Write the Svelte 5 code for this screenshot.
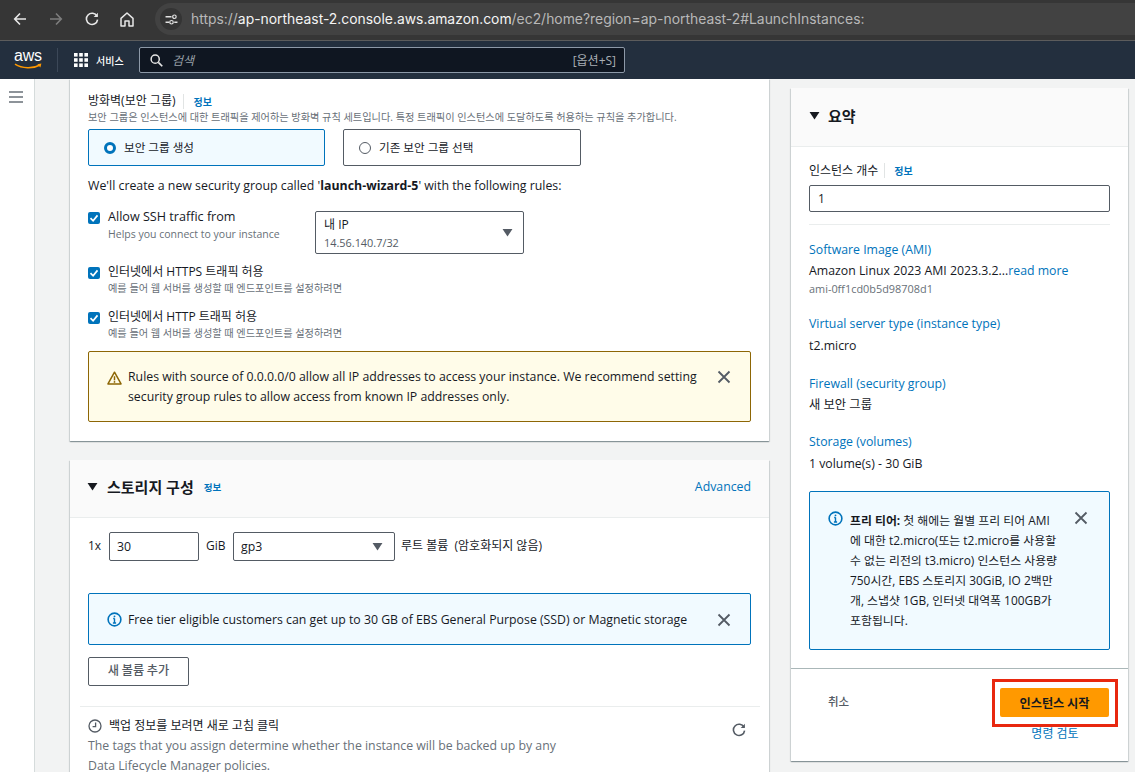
<script>
  const checks = [
    { label: '인터넷에서 HTTPS 트래픽 허용', sub: '예를 들어 웹 서버를 생성할 때 엔드포인트를 설정하려면' },
    { label: '인터넷에서 HTTP 트래픽 허용', sub: '예를 들어 웹 서버를 생성할 때 엔드포인트를 설정하려면' }
  ];
</script>

{#snippet closeIcon()}
  <svg class="close" viewBox="0 0 14 14" width="14" height="14"><path d="M1.5 1.5l11 11M12.5 1.5l-11 11" fill="none" stroke="#545b64" stroke-width="1.8"/></svg>
{/snippet}
{#snippet infoIcon()}
  <svg class="alert-icon" viewBox="0 0 16 16" width="15" height="15"><circle cx="8" cy="8" r="6.8" fill="none" stroke="#0073bb" stroke-width="1.7"/><path d="M8 7v4.6M6.3 11.7h3.4M6.6 7h1.6" fill="none" stroke="#0073bb" stroke-width="1.5"/><circle cx="8" cy="4.6" r="1" fill="#0073bb"/></svg>
{/snippet}
{#snippet checkbox()}
  <svg class="cb" viewBox="0 0 12 12" width="12" height="12"><rect width="12" height="12" rx="2" fill="#0073bb"/><path d="M2.5 6.2l2.6 2.6 4.4-5.4" fill="none" stroke="#fff" stroke-width="1.7"/></svg>
{/snippet}
{#snippet caret(cls)}
  <svg class={cls} viewBox="0 0 12 10" width="11" height="9"><path d="M0.5 1h11L6 9.5z" fill="currentColor"/></svg>
{/snippet}

<div class="page">
  <header class="chrome">
    <div class="tools">
      <svg class="t t1" viewBox="0 0 14 14" width="14" height="14"><path d="M13 7H2M7 1.5L1.7 7 7 12.5" fill="none" stroke="#e8e8e8" stroke-width="1.6"/></svg>
      <svg class="t t2" viewBox="0 0 14 14" width="14" height="14"><path d="M1 7h11M7 1.5L12.3 7 7 12.5" fill="none" stroke="#7d7d7d" stroke-width="1.6"/></svg>
      <svg class="t t3" viewBox="0 0 14 14" width="14" height="14"><path d="M12 4.2A5.6 5.6 0 1 0 12.6 7.6" fill="none" stroke="#e8e8e8" stroke-width="1.6"/><path d="M12.9 0.8v4.2H8.7z" fill="#e8e8e8"/></svg>
      <svg class="t t4" viewBox="0 0 14 15" width="14" height="15"><path d="M1 6.4L7 1l6 5.4V14H9V9H5v5H1z" fill="none" stroke="#e8e8e8" stroke-width="1.5" stroke-linejoin="round"/></svg>
    </div>
    <div class="pill">
      <span class="tune">
        <svg viewBox="0 0 14 12" width="13" height="11"><path d="M0.5 3h6.5M10 9h3.5M0.5 9h4" stroke="#e2e2e2" stroke-width="1.4" fill="none"/><circle cx="10.2" cy="3" r="1.9" fill="none" stroke="#e2e2e2" stroke-width="1.3"/><circle cx="7" cy="9" r="1.9" fill="none" stroke="#e2e2e2" stroke-width="1.3"/></svg>
      </span>
      <span class="url">https://<b>ap-northeast-2.console.aws.amazon.com</b>/ec2/home?region=ap-northeast-2#LaunchInstances:</span>
    </div>
  </header>

  <nav class="nav">
    <div class="logo">
      <span class="aws">aws</span>
      <svg viewBox="0 0 28 7" width="28" height="7"><path d="M1 1.2C8 5.6 19 6 26 2" fill="none" stroke="#f90" stroke-width="1.5"/><path d="M23.4 1.2l4-.6-1 3.8z" fill="#f90"/></svg>
    </div>
    <span class="nav-sep"></span>
    <svg class="grid" viewBox="0 0 14 14" width="14" height="14" fill="#fff"><rect width="3.6" height="3.6"/><rect x="5.2" width="3.6" height="3.6"/><rect x="10.4" width="3.6" height="3.6"/><rect y="5.2" width="3.6" height="3.6"/><rect x="5.2" y="5.2" width="3.6" height="3.6"/><rect x="10.4" y="5.2" width="3.6" height="3.6"/><rect y="10.4" width="3.6" height="3.6"/><rect x="5.2" y="10.4" width="3.6" height="3.6"/><rect x="10.4" y="10.4" width="3.6" height="3.6"/></svg>
    <span class="svc">서비스</span>
    <div class="search">
      <svg viewBox="0 0 14 14" width="13" height="13"><circle cx="5.6" cy="5.6" r="4.4" fill="none" stroke="#e6e6e6" stroke-width="1.6"/><path d="M9 9l4.2 4.2" stroke="#e6e6e6" stroke-width="1.8"/></svg>
      <span class="ph">검색</span>
      <span class="kbd">[옵션+S]</span>
    </div>
  </nav>

  <div class="body">
    <aside class="side">
      <svg viewBox="0 0 14 12" width="14" height="12"><path d="M0 1h14M0 6h14M0 11h14" stroke="#687078" stroke-width="1.7"/></svg>
    </aside>

    <main class="main">
      <section class="card c1">
        <div class="fw-head"><span class="fw-title">방화벽(보안 그룹)</span><span class="vsep"></span><span class="info-link">정보</span></div>
        <p class="fw-desc">보안 그룹은 인스턴스에 대한 트래픽을 제어하는 방화벽 규칙 세트입니다. 특정 트래픽이 인스턴스에 도달하도록 허용하는 규칙을 추가합니다.</p>
        <div class="radios">
          <div class="radio on"><span class="dot"></span>보안 그룹 생성</div>
          <div class="radio"><span class="dot"></span>기존 보안 그룹 선택</div>
        </div>
        <p class="create">We'll create a new security group called '<b>launch-wizard-5</b>' with the following rules:</p>
        <div class="ssh">
          <div class="check first">
            {@render checkbox()}
            <div class="check-text">
              <div class="check-label">Allow SSH traffic from</div>
              <div class="check-sub s1">Helps you connect to your instance</div>
            </div>
          </div>
          <div class="ip">
            <div><div class="ip-a">내 IP</div><div class="ip-b">14.56.140.7/32</div></div>
            {@render caret('caret-sel')}
          </div>
        </div>
        {#each checks as c, i}
          <div class="check" class:c2={i === 0} class:c3={i === 1}>
            {@render checkbox()}
            <div class="check-text">
              <div class="check-label">{c.label}</div>
              <div class="check-sub">{c.sub}</div>
            </div>
          </div>
        {/each}
        <div class="alert warn">
          <svg class="alert-icon" viewBox="0 0 16 15" width="15" height="14"><path d="M8 1.3L15 13.8H1z" fill="none" stroke="#8d6605" stroke-width="1.6" stroke-linejoin="round"/><path d="M8 5.6v4.4" stroke="#8d6605" stroke-width="1.6"/><circle cx="8" cy="11.7" r="0.95" fill="#8d6605"/></svg>
          <p>Rules with source of 0.0.0.0/0 allow all IP addresses to access your instance. We recommend setting security group rules to allow access from known IP addresses only.</p>
          {@render closeIcon()}
        </div>
      </section>

      <section class="card c2-card">
        <div class="card-head">
          {@render caret('caret-head')}
          <h2>스토리지 구성</h2>
          <span class="info-link small">정보</span>
          <span class="adv">Advanced</span>
        </div>
        <div class="card-body">
          <div class="vol">
            <span class="x">1x</span>
            <div class="box size">30</div>
            <span class="gib">GiB</span>
            <div class="box type">gp3 {@render caret('caret-gp')}</div>
            <span class="root">루트 볼륨&nbsp; (암호화되지 않음)</span>
          </div>
          <div class="alert inf">
            {@render infoIcon()}
            <p>Free tier eligible customers can get up to 30 GB of EBS General Purpose (SSD) or Magnetic storage</p>
            {@render closeIcon()}
          </div>
          <button class="add">새 볼륨 추가</button>
        </div>
        <div class="backup">
          <div class="backup-text">
            <div class="backup-title">
              <svg viewBox="0 0 14 14" width="14" height="14"><circle cx="7" cy="7" r="6" fill="none" stroke="#545b64" stroke-width="1.3"/><path d="M7.6 3.4v4.2H4.6" fill="none" stroke="#545b64" stroke-width="1.3"/></svg>
              백업 정보를 보려면 새로 고침 클릭
            </div>
            <p>The tags that you assign determine whether the instance will be backed up by any Data Lifecycle Manager policies.</p>
          </div>
          <svg class="refresh" viewBox="0 0 14 14" width="14" height="14"><path d="M12 4.2A5.6 5.6 0 1 0 12.6 7.6" fill="none" stroke="#545b64" stroke-width="1.6"/><path d="M12.9 0.8v4.2H8.7z" fill="#545b64"/></svg>
        </div>
      </section>
    </main>

    <section class="card summary">
      <div class="sum-head">
        {@render caret('caret-sum')}
        <h2>요약</h2>
      </div>
      <div class="sum-body">
        <div class="count-label"><span>인스턴스 개수</span><span class="vsep"></span><span class="info-link small2">정보</span></div>
        <div class="count">1</div>
        <hr />
        <a class="k k1">Software Image (AMI)</a>
        <div class="v">Amazon Linux 2023 AMI 2023.3.2...<span class="more">read more</span></div>
        <div class="ami">ami-0ff1cd0b5d98708d1</div>
        <a class="k k2">Virtual server type (instance type)</a>
        <div class="v wide">t2.micro</div>
        <a class="k k3">Firewall (security group)</a>
        <div class="v">새 보안 그룹</div>
        <a class="k k4">Storage (volumes)</a>
        <div class="v wide">1 volume(s) - 30 GiB</div>
        <div class="free">
          {@render infoIcon()}
          <p><b>프리 티어:</b> 첫 해에는 월별 프리 티어 AMI<br />에 대한 t2.micro(또는 t2.micro를 사용할<br />수 없는 리전의 t3.micro) 인스턴스 사용량<br />750시간, EBS 스토리지 30GiB, IO 2백만<br />개, 스냅샷 1GB, 인터넷 대역폭 100GB가<br />포함됩니다.</p>
          {@render closeIcon()}
        </div>
      </div>
      <div class="sum-foot">
        <span class="cancel">취소</span>
        <div class="launch-col">
          <div class="launch-mark"><button class="launch">인스턴스 시작</button></div>
          <span class="review">명령 검토</span>
        </div>
      </div>
    </section>
  </div>
</div>

<style>
  :global(body) { margin: 0; background: #f2f3f3; }
  * { box-sizing: border-box; }
  p, h2 { margin: 0; }
  .page {
    width: 1135px; height: 772px; overflow: hidden; display: flex; flex-direction: column;
    font-family: "Open Sans", "Noto Sans CJK KR", sans-serif; font-size: 12px; color: #16191f;
  }
  .chrome { height: 41px; flex: none; background: #363636; border-bottom: 1px solid #5c5c5c; display: flex; align-items: flex-start; padding-top: 3px; }
  .tools { width: 155px; height: 32px; display: flex; align-items: center; padding-left: 13px; flex: none; }
  .t2 { margin-left: 22px; }
  .t3 { margin-left: 22px; }
  .t4 { margin-left: 21px; }
  .pill { flex: 1; height: 32px; background: #424242; border-radius: 16px 0 0 16px; display: flex; align-items: center; padding-left: 5px; }
  .tune { width: 22px; height: 22px; border-radius: 50%; background: #343434; display: flex; align-items: center; justify-content: center; flex: none; }
  .url { margin-left: 9px; font-family: Inter, sans-serif; font-size: 13.9px; color: #b8b8b8; white-space: nowrap; }
  .url b { font-weight: 400; color: #f4f4f4; }
  .nav { height: 38px; flex: none; background: #232f3e; display: flex; align-items: center; padding-left: 14px; }
  .logo { width: 28px; height: 24px; display: flex; flex-direction: column; align-items: center; flex: none; }
  .aws { font-family: "Liberation Sans", sans-serif; font-size: 16px; line-height: 15px; color: #fff; letter-spacing: -0.2px; }
  .nav-sep { width: 1px; height: 24px; background: #3c4858; margin-left: 15px; flex: none; }
  .grid { margin-left: 16px; flex: none; }
  .svc { margin-left: 8px; color: #fff; font-size: 10px; font-weight: 500; width: 28px; white-space: nowrap; }
  .search { margin-left: 15px; width: 486px; height: 26px; border: 1px solid #8d99a8; border-radius: 2px; background: #0f1621; display: flex; align-items: center; padding: 0 8px 0 10px; }
  .ph { margin-left: 9px; font-style: italic; color: #98a0a8; font-size: 12px; }
  .kbd { margin-left: auto; color: #a8aeb4; font-size: 12px; }
  .body { flex: 1; min-height: 0; display: flex; align-items: flex-start; background: #f2f3f3; }
  .side { width: 35px; height: 100%; flex: none; background: #fff; border-right: 1px solid #d5dbdb; padding: 11px 0 0 9px; }
  .main { width: 699px; margin-left: 35px; flex: none; display: flex; flex-direction: column; gap: 19px; }
  .card { background: #fff; box-shadow: 0 1px 1px rgba(0, 28, 36, 0.3), 1px 1px 1px rgba(0, 28, 36, 0.1), -1px 1px 1px rgba(0, 28, 36, 0.1); }
  .c1 { height: 362px; padding: 14px 18px 0; flex: none; }
  .fw-head { display: flex; align-items: center; height: 16px; }
  .fw-title { font-size: 12px; line-height: 16px; }
  .vsep { width: 1px; height: 15px; background: #e1e4e4; margin: 0 9px 0 8px; }
  .info-link { font-size: 10px; font-weight: 700; color: #0073bb; }
  .fw-desc { margin-top: 1px; font-size: 10.2px; line-height: 14px; color: #687078; white-space: nowrap; }
  .radios { display: flex; gap: 18px; margin-top: 5px; }
  .radio { height: 37px; width: 238px; border: 1px solid #545b64; border-radius: 2px; display: flex; align-items: center; font-size: 11.6px; padding: 0 0 2px 15px; }
  .radio.on { width: 237px; background: #f1faff; border-color: #0073bb; }
  .dot { width: 12px; height: 12px; border-radius: 50%; border: 1px solid #545b64; margin: 2px 8px 0 0; background: #fff; flex: none; }
  .on .dot { border: 3.5px solid #0073bb; }
  .create { margin-top: 11px; line-height: 18px; font-size: 12.35px; white-space: nowrap; }
  .ssh { display: flex; margin-top: 16px; height: 43px; }
  .check { display: flex; align-items: flex-start; }
  .check.first { width: 227px; margin-top: -2px; }
  .cb { margin-top: 3px; flex: none; margin-right: 8px; }
  .check-label { font-size: 12px; line-height: 16px; }
  .first .check-label { font-size: 12.6px; }
  .check-sub { font-size: 10.2px; line-height: 14px; margin-top: 1px; color: #687078; white-space: nowrap; }
  .check-sub.s1 { font-size: 10.5px; margin-top: 2px; }
  .c2 { margin-top: 10px; }
  .c3 { margin-top: 14px; }
  .ip { width: 209px; height: 43px; border: 1px solid #545b64; border-radius: 2px; display: flex; align-items: center; justify-content: space-between; padding: 0 10px 0 8px; }
  .ip-a { font-size: 12px; line-height: 16px; margin-top: 2px; }
  .ip-b { font-size: 10.9px; line-height: 15px; margin-top: 2px; color: #545b64; }
  :global(.caret-sel), :global(.caret-gp) { color: #545b64; flex: none; }
  .alert { border: 1px solid; border-radius: 2px; display: flex; }
  .alert p { font-size: 12.3px; line-height: 20px; }
  .warn { margin-top: 11px; height: 71px; background: #fffce9; border-color: #8d6605; padding: 15px 0 0 18px; }
  .warn p { margin-left: 6px; width: 572px; }
  .warn :global(.alert-icon) { margin-top: 4px; flex: none; }
  .warn :global(.close) { margin: 3px 0 0 17px; flex: none; }
  .c2-card { flex: none; height: 340px; }
  .card-head { height: 58px; background: #fafafa; border-bottom: 1px solid #eaeded; display: flex; align-items: center; padding: 0 18px 4px; }
  :global(.caret-head) { color: #16191f; margin-right: 9px; flex: none; margin-left: -1px; }
  .card-head h2 { font-size: 15px; font-weight: 700; margin-right: 10px; }
  .small { font-size: 9.5px; }
  .adv { margin-left: auto; color: #0073bb; font-size: 12.3px; }
  .card-body { padding: 14px 18px 0; }
  .vol { display: flex; align-items: flex-start; height: 29px; }
  .x { font-size: 12px; width: 21px; line-height: 27px; }
  .box { height: 29px; border: 1px solid #545b64; border-radius: 2px; font-size: 12.3px; display: flex; align-items: center; padding-left: 7px; }
  .size { width: 90px; }
  .gib { width: 34px; padding-left: 7px; line-height: 27px; font-size: 12px; }
  .type { width: 162px; justify-content: space-between; padding-right: 11px; }
  .root { margin-left: 6px; line-height: 27px; font-size: 12px; }
  .inf { margin-top: 32px; height: 52px; background: #f1faff; border-color: #0073bb; padding: 18px 0 0 18px; }
  .inf p { line-height: 16px; margin-left: 6px; width: 572px; white-space: nowrap; }
  .inf :global(.alert-icon) { flex: none; margin-top: 0; }
  .inf :global(.close) { margin: 1px 0 0 17px; flex: none; }
  .add { display: block; margin-top: 12px; width: 101px; height: 29px; border: 1px solid #545b64; border-radius: 2px; background: #fff; font: 500 12.2px "Noto Sans CJK KR", sans-serif; color: #545b64; padding: 0 0 3px; }
  .backup { margin: 20px 9px 0 10px; border-top: 1px solid #eaeded; padding: 11px 14px 0 8px; display: flex; justify-content: space-between; align-items: flex-start; }
  .backup-text { width: 480px; }
  .backup-title { display: flex; align-items: center; gap: 7px; font-size: 12px; line-height: 15px; }
  .backup-text p { color: #687078; font-size: 12.3px; line-height: 20px; margin-top: 3px; }
  .refresh { margin-top: 5px; flex: none; }
  .summary { width: 337px; height: 673px; margin: 9px 0 0 22px; flex: none; display: flex; flex-direction: column; }
  .sum-head { height: 59px; background: #fafafa; border-bottom: 1px solid #eaeded; display: flex; align-items: center; padding: 0 0 4px 18px; }
  :global(.caret-sum) { margin-right: 8px; color: #16191f; flex: none; }
  .sum-head h2 { font-size: 15px; font-weight: 700; }
  .sum-body { padding: 15px 18px 0; height: 521px; flex: none; }
  .count-label { display: flex; align-items: center; height: 16px; font-size: 12px; }
  .count-label .vsep { margin: 0 9px 0 6px; }
  .small2 { font-size: 10px; }
  .count { margin-top: 7px; height: 27px; border: 1px solid #545b64; border-radius: 2px; padding-left: 8px; font-size: 12px; line-height: 25px; width: 301px; }
  hr { margin: 12px 0 0; border: 0; border-top: 1px solid #eaeded; width: 301px; }
  .k { display: block; color: #0073bb; font-size: 12.3px; line-height: 16px; }
  .k1 { margin-top: 17px; }
  .k2 { margin-top: 20px; }
  .k3 { margin-top: 22px; }
  .k4 { margin-top: 21px; }
  .v { font-size: 12.3px; line-height: 16px; margin-top: 5px; white-space: nowrap; }
  .v.wide { margin-top: 6px; }
  .more { color: #0073bb; }
  .ami { font-size: 10.9px; line-height: 14px; color: #687078; margin-top: 3px; }
  .free { margin-top: 19px; width: 301px; height: 159px; border: 1px solid #0073bb; border-radius: 2px; background: #f1faff; display: flex; padding: 19px 0 0 18px; }
  .free :global(.alert-icon) { flex: none; }
  .free p { font-size: 11.9px; line-height: 20px; margin: -1px 0 0 7px; white-space: nowrap; width: 209px; }
  .free :global(.close) { flex: none; margin: 0 0 0 15px; }
  .sum-foot { flex: 1; border-top: 1px solid #aab7b8; display: flex; padding: 10px 0 0 37px; }
  .cancel { font-size: 11.5px; line-height: 46px; color: #545b64; font-weight: 500; }
  .launch-col { margin-left: auto; margin-right: 10px; width: 126px; display: flex; flex-direction: column; align-items: center; flex: none; }
  .launch-mark { width: 126px; height: 48px; border: 3px solid #e8280f; background: #fff; padding: 6px 5px; }
  .launch { display: block; width: 109px; height: 29px; border: 0; border-radius: 2px; background: #ff9900; font: 700 12.2px "Noto Sans CJK KR", sans-serif; color: #16191f; padding: 0; }
  .review { color: #0073bb; font-size: 12px; line-height: 13px; }
</style>
